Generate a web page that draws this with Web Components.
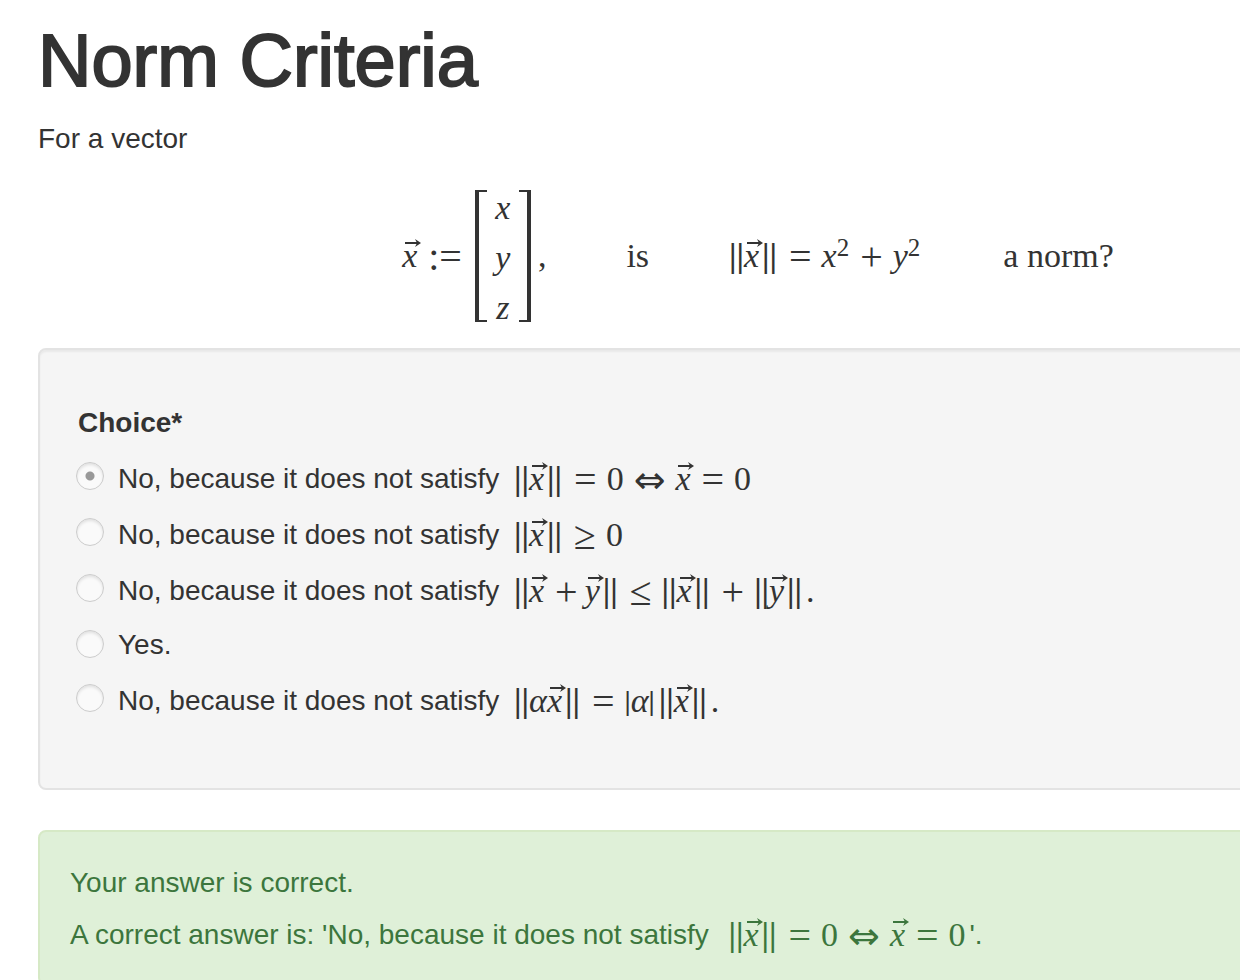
<!DOCTYPE html>
<html lang="en">
<head>
<meta charset="utf-8">
<meta name="viewport" content="width=device-width, initial-scale=1">
<title>Norm Criteria</title>
<style>
  body { margin: 0; background: #fff; color: #333; overflow-x: hidden;
         font: 28px/40px "Liberation Sans", Arial, sans-serif; }
</style>
</head>
<body>
<quiz-page>
  <span slot="title">Norm Criteria</span>
  <span slot="intro">For a vector</span>
  <math-f slot="formula">
    <m-vec>x</m-vec><m-op>:=</m-op>
    <m-matrix><m-i>x</m-i><m-i>y</m-i><m-i>z</m-i></m-matrix>
    <m-t>,</m-t><m-quad></m-quad><m-t>is</m-t><m-quad></m-quad>
    <m-norm><m-vec>x</m-vec></m-norm><m-op>=</m-op><m-i>x</m-i><m-sup>2</m-sup><m-op>+</m-op><m-i>y</m-i><m-sup>2</m-sup>
    <m-quad></m-quad><m-t>a norm?</m-t>
  </math-f>
  <choice-panel label="Choice*">
    <choice-option checked>No, because it does not satisfy <math-f><m-norm><m-vec>x</m-vec></m-norm><m-op>=</m-op><m-t>0</m-t><m-iff>⇔</m-iff><m-vec>x</m-vec><m-op>=</m-op><m-t>0</m-t></math-f></choice-option>
    <choice-option>No, because it does not satisfy <math-f><m-norm><m-vec>x</m-vec></m-norm><m-op>≥</m-op><m-t>0</m-t></math-f></choice-option>
    <choice-option>No, because it does not satisfy <math-f><m-norm><m-vec>x</m-vec><m-op tight>+</m-op><m-vec>y</m-vec></m-norm><m-op>≤</m-op><m-norm><m-vec>x</m-vec></m-norm><m-op>+</m-op><m-norm><m-vec>y</m-vec></m-norm><m-t>.</m-t></math-f></choice-option>
    <choice-option plain>Yes.</choice-option>
    <choice-option>No, because it does not satisfy <math-f><m-norm><m-i>α</m-i><m-vec>x</m-vec></m-norm><m-op>=</m-op><m-abs><m-i>α</m-i></m-abs><m-norm><m-vec>x</m-vec></m-norm><m-t>.</m-t></math-f></choice-option>
  </choice-panel>
  <answer-alert>
    <answer-line>Your answer is correct.</answer-line>
    <answer-line>A correct answer is: 'No, because it does not satisfy <math-f><m-norm><m-vec>x</m-vec></m-norm><m-op>=</m-op><m-t>0</m-t><m-iff>⇔</m-iff><m-vec>x</m-vec><m-op>=</m-op><m-t>0</m-t></math-f>'.</answer-line>
  </answer-alert>
</quiz-page>

<script>
const define = (name, css, html = '<slot></slot>') => {
  const template = document.createElement('template');
  template.innerHTML = `<style>${css}</style>${html}`;
  customElements.define(name, class extends HTMLElement {
    constructor() {
      super();
      this.attachShadow({ mode: 'open' }).append(template.content.cloneNode(true));
    }
  });
};

/* Page frame */
define('quiz-page', `
  :host { display: block; padding: 21px 0 0 38px; margin-right: -236px; }
  h1 { margin: 0 0 18px; font-size: 74px; line-height: 80px; font-weight: 400; -webkit-text-stroke: 2px currentColor; }
  p { margin: 0; }
  .display { display: flex; justify-content: center; align-items: center; height: 184px; padding: 5px 0 0 6px; }
`, `<main><h1><slot name="title"></slot></h1><p><slot name="intro"></slot></p>
  <div class="display"><slot name="formula"></slot></div><slot></slot></main>`);

/* Mathematical notation */
define('math-f', `:host { display: inline-flex; align-items: center; vertical-align: -2px; margin: 0 4px 0 var(--lead, 0);
  font: 34px/34px "Liberation Serif", "Times New Roman", serif; white-space: nowrap; }`);
define('m-t', ':host { display: block; }');
define('m-i', ':host { display: block; font-style: italic; }');
define('m-quad', ':host { display: block; width: 80px; }');
define('m-op', `:host { display: block; font-size: 40px; line-height: 34px; margin: 0 10px 0 8px; position: relative; top: 1px; }
  :host([tight]) { margin-right: 7px; }`);
define('m-iff', ':host { display: block; font-family: "DejaVu Sans", sans-serif; font-size: 38px; line-height: 34px; margin: 0 10px; position: relative; top: 1px; }');
define('m-sup', ':host { display: block; font-size: 25px; line-height: 25px; margin-right: 3px; position: relative; bottom: 9px; }');
define('m-vec', `
  :host { display: block; position: relative; width: 18px; font-style: italic; }
  svg { position: absolute; left: 3px; top: 0; width: 16px; height: 8px; }
`, `<slot></slot><svg viewBox="0 0 16 8" aria-hidden="true"><path d="M0 4H14" stroke="currentColor" stroke-width="2"/><path d="M10 0L16 4L10 8L12 4Z" fill="currentColor"/></svg>`);
define('m-norm', `:host { display: flex; align-items: center; margin-right: 4px; }
  span { font-weight: 700; }`,
  '<span>||</span><slot></slot><span>||</span>');
define('m-abs', `:host { display: flex; align-items: center; margin-right: 4px; }
  span { font-size: 28px; line-height: 28px; font-weight: 700; }`, '<span>|</span><slot></slot><span>|</span>');
define('m-matrix', `
  :host { display: flex; margin: 0 7px 0 3px; }
  .cells { display: flex; flex-direction: column; align-items: center; gap: 6px; line-height: 44px; width: 32px; padding-top: 4px; }
  .bracket { width: 8px; margin: 8px 0; border: solid currentColor; border-width: 2px 0; }
  .left { border-left-width: 4px; }
  .right { border-right-width: 4px; }
`, '<div class="bracket left"></div><div class="cells"><slot></slot></div><div class="bracket right"></div>');

/* Radio choices */
define('choice-option', `
  :host { display: block; padding-top: 2px; --lead: 7px; }
  :host([plain]) { padding-top: 0; }
  label { display: flex; gap: 14px; margin-left: -2px; }
  input { appearance: none; flex: none; width: 28px; height: 28px; margin: 3px 0 0; border: 1px solid #ccc;
          border-radius: 50%; background: #fafafa; box-shadow: inset 0 2px 3px rgba(0,0,0,.1); }
  :host([plain]) input { margin-top: 5px; }
  input:checked { background: radial-gradient(circle, #999 0 4px, #fafafa 5px); }
  span { white-space: pre; height: 40px; }
`, '<label><input type="radio"><span><slot></slot></span></label>');

customElements.define('choice-panel', class extends HTMLElement {
  connectedCallback() {
    if (this.shadowRoot) return;
    this.attachShadow({ mode: 'open' }).innerHTML = `<style>
      :host { display: block; background: #f5f5f5; border: 2px solid #e3e3e3; border-radius: 8px;
              padding: 53px 38px 67px; box-shadow: inset 0 2px 2px rgba(0,0,0,.05); }
      div { display: flex; flex-direction: column; gap: 14px; }
      b { font-weight: 700; }
    </style><div role="radiogroup" aria-labelledby="name"><b id="name"></b><slot></slot></div>`;
    this.shadowRoot.querySelector('b').textContent = this.getAttribute('label');
    const options = [...this.querySelectorAll('choice-option')];
    const inputs = options.map(o => o.shadowRoot.querySelector('input'));
    inputs.forEach((input, i) => {
      input.checked = options[i].hasAttribute('checked');
      input.addEventListener('change', () => inputs.forEach(other => { other.checked = other === input; }));
    });
  }
});

/* Feedback */
define('answer-alert', `:host { display: flex; flex-direction: column; gap: 12px; margin-top: 40px; padding: 31px 30px 29px;
  background: #dff0d8; border: 2px solid #d6e9c6; border-radius: 8px; color: #3c763d; }`);
define('answer-line', ':host { display: block; height: 40px; white-space: nowrap; --lead: 12px; }');
</script>
</body>
</html>
